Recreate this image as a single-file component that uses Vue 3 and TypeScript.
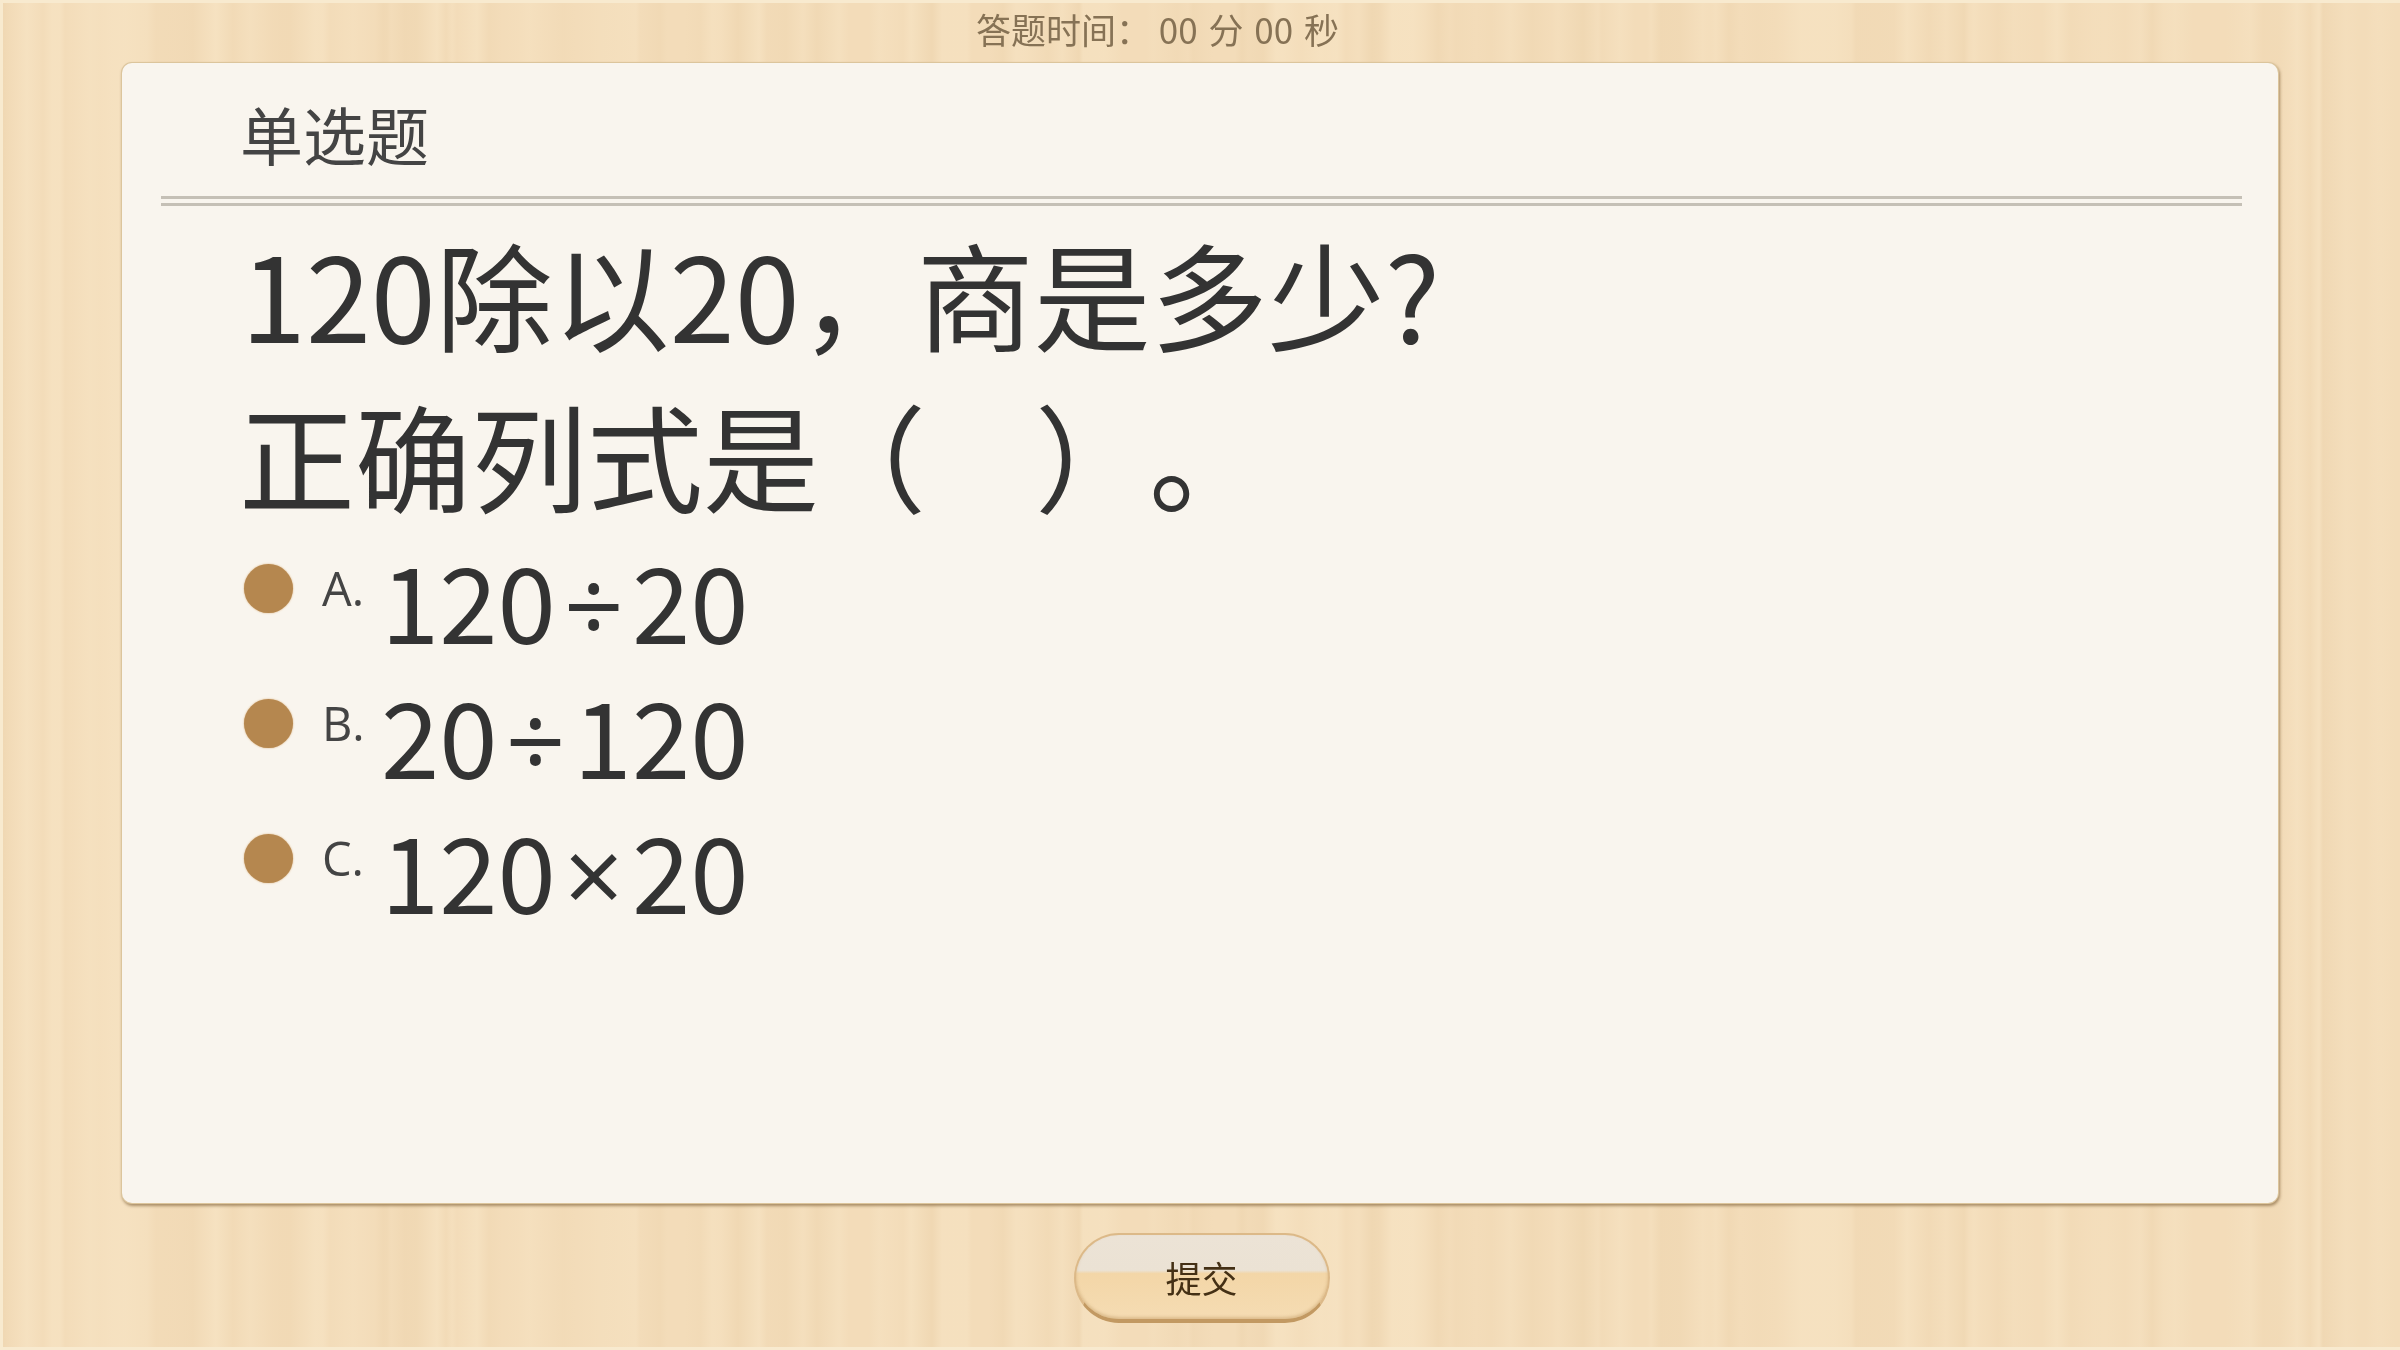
<script setup lang="ts">
import { computed } from 'vue'

interface Option { key: string; left: string; op: string; right: string }
const options: Option[] = [
  { key: 'A.', left: '120', op: '÷', right: '20' },
  { key: 'B.', left: '20', op: '÷', right: '120' },
  { key: 'C.', left: '120', op: '×', right: '20' },
]

// Seeded grain: soft vertical wood streaks
const grain = computed(() => {
  let seed = 417
  const rnd = () => {
    seed = (seed * 16807) % 2147483647
    return seed / 2147483647
  }
  const stops: string[] = []
  let x = 0
  while (x < 2400) {
    const l = rnd()
    const a = (0.1 + rnd() * 0.3).toFixed(2)
    const color = l > 0.6 ? `rgba(250,234,204,${a})` : l < 0.35 ? `rgba(234,208,168,${a})` : 'rgba(243,220,184,0)'
    stops.push(`${color} ${x.toFixed(0)}px`)
    x += 3 + rnd() * 22
  }
  return { backgroundImage: `linear-gradient(90deg, ${stops.join(',')})` }
})
</script>

<template>
  <div class="page" :style="grain">
    <div class="timer">答题时间：&nbsp;<span class="clock">00 分 00 秒</span></div>
    <main class="card">
      <h2 class="kind">单选题</h2>
      <div class="rule"></div>
      <div class="question">
        <p>120除以20，商是多少?</p>
        <p class="second">正确列式是<span class="open">（</span><span class="blank"></span>）<span class="stop">。</span></p>
      </div>
      <ul class="options">
        <li v-for="o in options" :key="o.key" class="option">
          <span class="dot"></span>
          <span class="key">{{ o.key }}</span>
          <span class="val">{{ o.left }}<span class="op">{{ o.op }}</span>{{ o.right }}</span>
        </li>
      </ul>
    </main>
    <div class="foot">
      <button class="submit" type="button">提交</button>
    </div>
  </div>
</template>

<style>
html, body { margin: 0; background: #f3dcb9; }
</style>

<style scoped>
.page {
  width: 2400px;
  height: 1350px;
  box-sizing: border-box;
  overflow: hidden;
  display: flex;
  flex-direction: column;
  background-color: #f3dcb9;
  font-family: "Noto Sans CJK SC", "Open Sans", sans-serif;
  color: #333;
  border-top: 3px solid #f8eacf;
  border-left: 3px solid #f8eacf;
  border-bottom: 3px solid #f8eacf;
  text-spacing-trim: space-all;
}
.timer {
  height: 60px;
  flex: none;
  box-sizing: border-box;
  padding: 3px 88px 0 0;
  text-align: center;
  font-size: 35px;
  line-height: 46px;
  color: #867255;
  filter: blur(0.7px);
}
.clock { word-spacing: 3px; }
.card {
  height: 1140px;
  flex: none;
  margin: 0 122px 0 119px;
  box-sizing: border-box;
  padding: 30px 36px 0 39px;
  background: #f9f5ee;
  border-radius: 10px;
  box-shadow: 0 0 0 1px #dcc59c, 1px 2px 3px 1px rgba(130, 100, 60, .65);
}
.kind {
  margin: 0;
  padding-left: 79px;
  font-size: 63px;
  font-weight: 400;
  line-height: 80px;
  color: #444;
  filter: blur(0.7px);
}
.rule {
  height: 4px;
  margin-top: 23px;
  border-top: 3px solid #c5c0b6;
  border-bottom: 3px solid #c5c0b6;
}
.question {
  padding-left: 80px;
  margin-top: 6px;
  font-size: 117px;
  line-height: 161px;
  color: #333;
  filter: blur(0.7px);
}
.question p { margin: 0; white-space: pre; }
.second { font-size: 116px; margin-left: -2px !important; }
.open { margin-left: -9px; }
.blank { display: inline-block; width: 109px; }
.stop { margin-left: -2px; }
.options {
  list-style: none;
  margin: -3px 0 0;
  padding: 0 0 0 83px;
  filter: blur(0.6px);
}
.option {
  display: flex;
  align-items: flex-start;
  height: 135px;
}
.dot {
  width: 49px;
  height: 49px;
  border-radius: 50%;
  margin-top: 33px;
  background: #b5874f;
  box-shadow: 0 0 2px #d8ad78;
  flex: none;
}
.key {
  margin-left: 29px;
  margin-top: 12px;
  width: 59px;
  flex: none;
  font-size: 47px;
  line-height: 90px;
  color: #444;
  font-family: "Open Sans", sans-serif;
}
.val {
  font-size: 105px;
  line-height: 135px;
  color: #333;
}
.op {
  font-family: "Open Sans", sans-serif;
  margin: 0 8px;
}
.foot {
  flex: 1;
  display: flex;
  justify-content: center;
  padding-top: 30px;
}
.submit {
  width: 256px;
  height: 90px;
  padding: 0;
  border: 2px solid #dcb988;
  border-bottom: 4px solid #c29962;
  border-radius: 45px;
  background: linear-gradient(180deg, #ece3d6 0, #ebe2d4 42%, #f3d6a7 46%, #f5dcb3 100%);
  box-shadow: inset 0 -2px 3px rgba(190, 150, 95, .45);
  font: 400 36px/1 "Noto Sans CJK SC", sans-serif;
  color: #443015;
  filter: blur(0.6px);
}
</style>
